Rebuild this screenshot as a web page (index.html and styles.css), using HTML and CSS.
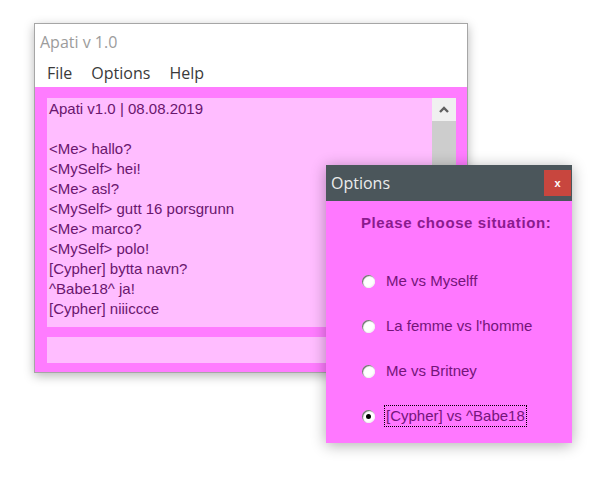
FILE: index.html
```html
<!DOCTYPE html>
<html>
<head>
<meta charset="utf-8">
<link rel="stylesheet" href="styles.css">
</head>
<body>
<div class="desktop">
  <div class="main-win">
    <div class="titlebar">Apati v 1.0</div>
    <div class="menubar"><span>File</span><span>Options</span><span>Help</span></div>
    <div class="client">
      <div class="chat">
        <div class="log">
          <div>Apati v1.0 | 08.08.2019</div>
          <div>&nbsp;</div>
          <div>&lt;Me&gt; hallo?</div>
          <div>&lt;MySelf&gt; hei!</div>
          <div>&lt;Me&gt; asl?</div>
          <div>&lt;MySelf&gt; gutt 16 porsgrunn</div>
          <div>&lt;Me&gt; marco?</div>
          <div>&lt;MySelf&gt; polo!</div>
          <div>[Cypher] bytta navn?</div>
          <div>^Babe18^ ja!</div>
          <div>[Cypher] niiiccce</div>
        </div>
        <div class="scrollbar">
          <div class="sb-btn"><svg width="10" height="7" viewBox="0 0 10 7"><path d="M1 6 L5 2 L9 6" fill="none" stroke="#5f5f5f" stroke-width="2.4"/></svg></div>
          <div class="sb-thumb"></div>
        </div>
      </div>
      <div class="input"></div>
    </div>
  </div>

  <div class="dialog">
    <div class="dlg-title">
      <span class="dlg-caption">Options</span>
      <span class="close">x</span>
    </div>
    <div class="dlg-body">
      <div class="heading">Please choose situation:</div>
      <div class="radios">
        <div class="radio-row"><span class="radio"></span><span class="label">Me vs Myselff</span></div>
        <div class="radio-row"><span class="radio"></span><span class="label">La femme vs l'homme</span></div>
        <div class="radio-row"><span class="radio"></span><span class="label">Me vs Britney</span></div>
        <div class="radio-row"><span class="radio checked"></span><span class="label focus">[Cypher] vs ^Babe18</span></div>
      </div>
    </div>
  </div>
</div>
</body>
</html>
```
FILE: styles.css
```css
html, body {
  margin: 0;
  padding: 0;
  background: #ffffff;
}
.desktop {
  position: relative;
  width: 602px;
  height: 482px;
  overflow: hidden;
}
.main-win {
  position: absolute;
  left: 34px;
  top: 23px;
  width: 434px;
  height: 350px;
  box-sizing: border-box;
  border: 1px solid #a6a6a6;
  background: #ffffff;
  display: flex;
  flex-direction: column;
  box-shadow: 0 3px 10px rgba(0,0,0,0.28);
}
.titlebar {
  height: 35px;
  padding-left: 5px;
  display: flex;
  align-items: center;
  font: 16px "Open Sans", sans-serif;
  color: #9c9c9c;
}
.menubar {
  height: 28px;
  padding-left: 12px;
  display: flex;
  align-items: center;
  gap: 19px;
  font: 16px "Open Sans", sans-serif;
  color: #3a3a3a;
}
.client {
  flex: 1;
  background: #ff7cff;
  padding: 11px 11px 9px 12px;
  display: flex;
  flex-direction: column;
  gap: 10px;
}
.chat {
  height: 229px;
  display: flex;
  background: #ffbdff;
}
.log {
  flex: 1;
  padding: 1px 2px;
  font: 15px/20px "Liberation Sans", Arial, sans-serif;
  color: #6a166e;
}
.scrollbar {
  width: 24px;
  display: flex;
  flex-direction: column;
  background: #f0f0f0;
}
.sb-btn {
  height: 23px;
  display: flex;
  align-items: center;
  justify-content: center;
  background: #f0f0f0;
}
.sb-thumb {
  height: 160px;
  background: #cdcdcd;
}
.input {
  height: 26px;
  background: #ffbdff;
}
.dialog {
  position: absolute;
  left: 326px;
  top: 165px;
  width: 246px;
  height: 278px;
  background: #ff78ff;
  box-shadow: 0 2px 14px rgba(0,0,0,0.32);
  display: flex;
  flex-direction: column;
}
.dlg-title {
  height: 36px;
  background: #4b565b;
  display: flex;
  align-items: center;
  justify-content: space-between;
  padding: 0 1px 0 5px;
}
.dlg-caption {
  font: 16px "Open Sans", sans-serif;
  color: #ececec;
}
.close {
  width: 27px;
  height: 26px;
  background: #c8463e;
  color: #ffffff;
  font: bold 11px "Liberation Sans", Arial, sans-serif;
  display: flex;
  align-items: center;
  justify-content: center;
}
.dlg-body {
  padding: 13px 0 0 36px;
}
.heading {
  margin-left: -1px;
  font: bold 15px/18px "Liberation Sans", Arial, sans-serif;
  letter-spacing: 0.6px;
  color: #8a1b8e;
}
.radios {
  margin-top: 38px;
  display: flex;
  flex-direction: column;
  gap: 23px;
}
.radio-row {
  height: 22px;
  display: flex;
  align-items: center;
  gap: 9px;
}
.radio {
  width: 13px;
  height: 13px;
  border-radius: 50%;
  box-sizing: border-box;
  background: radial-gradient(circle at 55% 55%, #ffffff 0 55%, #e9e9e9 75%);
  box-shadow: inset 1px 1px 1px #6a6a6a, inset -1px -1px 1px #f4f4f4;
  position: relative;
}
.radio.checked::after {
  content: "";
  position: absolute;
  left: 4px;
  top: 4px;
  width: 5px;
  height: 5px;
  border-radius: 50%;
  background: #000000;
}
.label {
  font: 15px/18px "Liberation Sans", Arial, sans-serif;
  color: #74157a;
  padding: 1px;
  border: 1px solid transparent;
}
.label.focus {
  border: 1px dotted #000000;
}
```
